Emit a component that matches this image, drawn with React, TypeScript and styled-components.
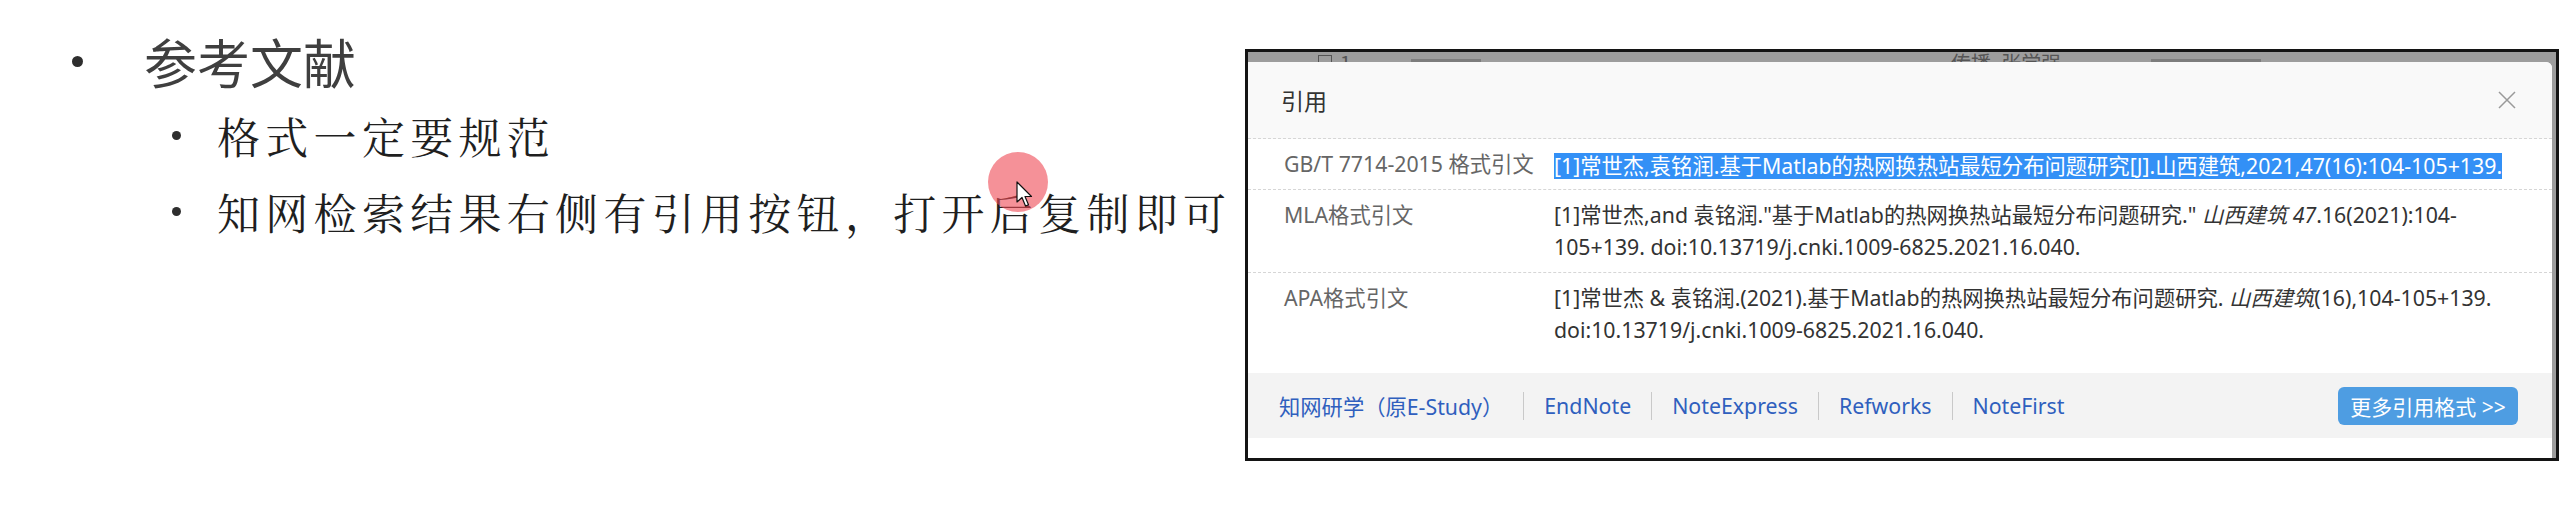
import React from "react";
import styled, { createGlobalStyle } from "styled-components";

const Global = createGlobalStyle`
  html, body { margin: 0; padding: 0; background: #ffffff; }
  body {
    width: 2559px;
    height: 509px;
    overflow: hidden;
    font-family: "Noto Sans", "Noto Sans CJK SC", sans-serif;
  }
`;

const Page = styled.div`
  display: flex;
  width: 2559px;
  height: 509px;
  background: #ffffff;
`;

/* ---------- slide (left) ---------- */

const Slide = styled.div`
  position: relative;
  flex: 0 0 1245px;
  min-width: 0;
  padding-top: 25px;
  box-sizing: border-box;
`;

const Level1 = styled.div`
  display: flex;
  align-items: center;
  height: 72px;
  padding-left: 72px;
`;

const Level2 = styled.div`
  display: flex;
  align-items: center;
  height: 76px;
  padding-left: 172px;
`;

const Dot = styled.span<{ $size: number; $gap: number }>`
  flex: 0 0 auto;
  width: ${(p) => p.$size}px;
  height: ${(p) => p.$size}px;
  border-radius: 50%;
  background: #2e2e2e;
  margin-right: ${(p) => p.$gap}px;
`;

const Heading = styled.span`
  font-family: "Noto Sans CJK SC", sans-serif;
  font-size: 53px;
  line-height: 1;
  color: #3f3f3f;
  white-space: nowrap;
`;

const Point = styled.span`
  font-family: "Noto Serif CJK SC", "Noto Sans CJK SC", serif;
  font-size: 43px;
  letter-spacing: 5.3px;
  line-height: 1;
  color: #1f1f1f;
  white-space: nowrap;
`;

const Pointer = styled.div`
  position: absolute;
  left: 988px;
  top: 152px;
  width: 60px;
  height: 60px;
  border-radius: 50%;
  background: rgba(238, 72, 84, 0.6);
`;

const Arrow = styled.svg`
  position: absolute;
  left: 28px;
  top: 29px;
`;

/* ---------- screenshot (right) ---------- */

const Shot = styled.div`
  flex: 0 0 1314px;
  min-width: 0;
  margin-top: 49px;
  height: 412px;
  box-sizing: border-box;
  border: 3px solid #141414;
  background: #9d9d9d;
  display: flex;
  flex-direction: column;
  overflow: hidden;
`;

const Backdrop = styled.div`
  flex: 0 0 10px;
  display: flex;
  align-items: flex-start;
  overflow: hidden;
  font-family: "Noto Sans CJK SC", sans-serif;
  font-size: 20px;
  line-height: 20px;
  color: #555555;
`;

const Ghost = styled.span<{ $ml: number }>`
  margin-left: ${(p) => p.$ml}px;
  white-space: nowrap;
  padding-top: 1px;
`;

const GhostBox = styled.span<{ $ml: number }>`
  margin-left: ${(p) => p.$ml}px;
  width: 14px;
  height: 14px;
  margin-top: 3px;
  border: 1px solid #555;
  box-sizing: border-box;
`;

const GhostBar = styled.span<{ $ml: number; $w: number }>`
  margin-left: ${(p) => p.$ml}px;
  width: ${(p) => p.$w}px;
  height: 3px;
  margin-top: 7px;
  background: #7d7d7d;
`;

const Dialog = styled.div`
  flex: 1 1 auto;
  margin-right: 4px;
  background: #ffffff;
  border-radius: 0 6px 0 0;
  display: flex;
  flex-direction: column;
  padding-bottom: 20px;
  box-sizing: border-box;
`;

const Header = styled.div`
  flex: 0 0 76px;
  display: flex;
  align-items: center;
  justify-content: space-between;
  padding: 0 36px 0 33px;
  background: #f9f9f9;
  border-bottom: 1px dashed #d6d6d6;
  border-radius: 0 6px 0 0;
`;

const Title = styled.span`
  font-family: "Noto Sans CJK SC", sans-serif;
  font-size: 23px;
  color: #333333;
`;

const Body = styled.div`
  padding-bottom: 18px;
`;

const Row = styled.div<{ $last?: boolean }>`
  display: grid;
  grid-template-columns: 270px 1fr;
  padding: 9px 0 9px 36px;
  border-bottom: ${(p) => (p.$last ? "none" : "1px dashed #d6d6d6")};
  font-size: 21.3px;
  line-height: 32px;
`;

const Label = styled.div`
  color: #666666;
  white-space: nowrap;
`;

const Value = styled.div`
  color: #333333;
  white-space: nowrap;
`;

const Selected = styled.span`
  display: inline-block;
  line-height: 26px;
  vertical-align: middle;
  background: #3390f6;
  color: #ffffff;
`;

const Em = styled.i`
  font-style: italic;
`;

const Footer = styled.div`
  flex: 0 0 65px;
  display: flex;
  align-items: center;
  padding: 0 34px 0 31px;
  background: #f3f3f3;
`;

const Link = styled.span`
  font-size: 21.3px;
  color: #2f5fbe;
  white-space: nowrap;
`;

const Sep = styled.span`
  width: 1px;
  height: 28px;
  margin: 0 20px;
  background: #c9c9c9;
`;

const MoreButton = styled.span`
  margin-left: auto;
  width: 180px;
  height: 38px;
  border-radius: 6px;
  background: #4e9de2;
  color: #ffffff;
  font-size: 21px;
  display: flex;
  align-items: center;
  justify-content: center;
  white-space: nowrap;
`;

const links = ["知网研学（原E-Study）", "EndNote", "NoteExpress", "Refworks", "NoteFirst"];

export default function App() {
  return (
    <>
      <Global />
      <Page>
        <Slide>
          <Level1>
            <Dot $size={11} $gap={61} />
            <Heading>参考文献</Heading>
          </Level1>
          <Level2>
            <Dot $size={9} $gap={36} />
            <Point>格式一定要规范</Point>
          </Level2>
          <Level2>
            <Dot $size={9} $gap={36} />
            <Point>知网检索结果右侧有引用按钮，打开后复制即可</Point>
          </Level2>
          <Pointer>
            <Arrow width="18" height="28" viewBox="0 0 18 28">
              <path
                d="M1 1 L1 21 L6 16.5 L9.5 25 L12.5 23.8 L9 15.5 L15.5 15.5 Z"
                fill="#ffffff"
                stroke="#111111"
                strokeWidth="1.2"
                strokeLinejoin="round"
              />
            </Arrow>
          </Pointer>
        </Slide>

        <Shot>
          <Backdrop>
            <GhostBox $ml={70} />
            <Ghost $ml={8}>1</Ghost>
            <GhostBar $ml={60} $w={70} />
            <Ghost $ml={470}>传播, 张学强</Ghost>
            <GhostBar $ml={90} $w={110} />
          </Backdrop>
          <Dialog>
            <Header>
              <Title>引用</Title>
              <svg width="18" height="18" viewBox="0 0 18 18">
                <path d="M1 1 L17 17 M17 1 L1 17" stroke="#9a9a9a" strokeWidth="1.5" fill="none" />
              </svg>
            </Header>
            <Body>
              <Row>
                <Label>GB/T 7714-2015 格式引文</Label>
                <Value>
                  <Selected>
                    [1]常世杰,袁铭润.基于Matlab的热网换热站最短分布问题研究[J].山西建筑,2021,47(16):104-105+139.
                  </Selected>
                </Value>
              </Row>
              <Row>
                <Label>MLA格式引文</Label>
                <Value>
                  [1]常世杰,and 袁铭润."基于Matlab的热网换热站最短分布问题研究." <Em>山西建筑 47</Em>.16(2021):104-
                  <br />
                  105+139. doi:10.13719/j.cnki.1009-6825.2021.16.040.
                </Value>
              </Row>
              <Row $last>
                <Label>APA格式引文</Label>
                <Value>
                  [1]常世杰 &amp; 袁铭润.(2021).基于Matlab的热网换热站最短分布问题研究. <Em>山西建筑</Em>(16),104-105+139.
                  <br />
                  doi:10.13719/j.cnki.1009-6825.2021.16.040.
                </Value>
              </Row>
            </Body>
            <Footer>
              {links.map((l, i) => (
                <React.Fragment key={l}>
                  {i > 0 && <Sep />}
                  <Link>{l}</Link>
                </React.Fragment>
              ))}
              <MoreButton>更多引用格式 &gt;&gt;</MoreButton>
            </Footer>
          </Dialog>
        </Shot>
      </Page>
    </>
  );
}
